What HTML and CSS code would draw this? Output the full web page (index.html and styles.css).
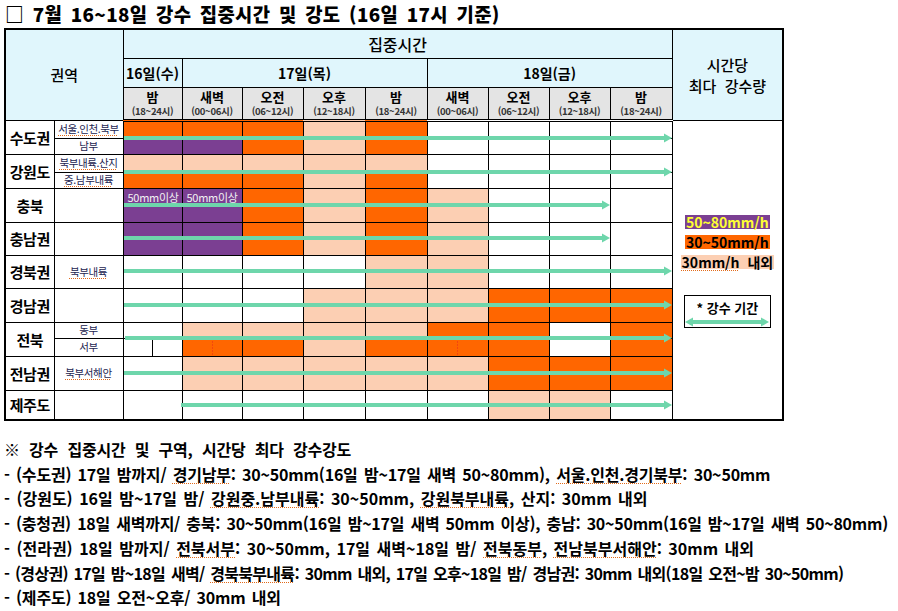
FILE: index.html
```html
<!DOCTYPE html>
<html lang="ko">
<head>
<meta charset="utf-8">
<title>7월 16~18일 강수 집중시간 및 강도</title>
<link rel="stylesheet" href="styles.css">
</head>
<body>
<h1 class="title">□ 7월 16~18일 강수 집중시간 및 강도 (16일 17시 기준)</h1>
<div class="chart">
<table class="grid">
<colgroup>
<col class="w49"><col class="w69"><col class="w59"><col class="w60"><col class="w61"><col class="w62"><col class="w62"><col class="w61"><col class="w61"><col class="w61"><col class="w62"><col class="w111">
</colgroup>
<thead>
<tr class="h1">
<th colspan="2" rowspan="3" class="hd reg-hd">권역</th>
<th colspan="9" class="hd big">집중시간</th>
<th rowspan="3" class="hd side">시간당<br>최다&nbsp; 강수량</th>
</tr>
<tr class="h2">
<th class="hd day">16일(수)</th>
<th colspan="4" class="hd day">17일(목)</th>
<th colspan="4" class="hd day">18일(금)</th>
</tr>
<tr class="h3">
<th class="tm"><b>밤</b><small>(18~24시)</small></th>
<th class="tm"><b>새벽</b><small>(00~06시)</small></th>
<th class="tm"><b>오전</b><small>(06~12시)</small></th>
<th class="tm"><b>오후</b><small>(12~18시)</small></th>
<th class="tm"><b>밤</b><small>(18~24시)</small></th>
<th class="tm"><b>새벽</b><small>(00~06시)</small></th>
<th class="tm"><b>오전</b><small>(06~12시)</small></th>
<th class="tm"><b>오후</b><small>(12~18시)</small></th>
<th class="tm"><b>밤</b><small>(18~24시)</small></th>
</tr>
</thead>
<tbody>
<tr class="r18">
<td rowspan="2" class="reg">수도권</td><td class="sub"><span class="sp">서울.인천.북부</span></td>
<td class="o"></td><td class="o"></td><td class="o"></td><td class="p"></td><td class="o"></td><td></td><td></td><td></td><td></td>
<td rowspan="12" class="legend-cell">
<div class="legend">
<span class="lg lg-purple">50~80mm/h</span>
<span class="lg lg-orange">30~50mm/h</span>
<span class="lg lg-peach"><span class="sp">30mm/h</span>&nbsp; 내외</span>
<div class="lg-box">
<span class="lg-box-text">* 강수 기간</span>
<svg class="lg-arrow" width="84" height="10" viewBox="0 0 84 10"><line x1="6" y1="5" x2="78" y2="5" stroke="#6ed6ab" stroke-width="4"/><polygon points="0,5 8,0.5 8,9.5" fill="#6ed6ab"/><polygon points="84,5 76,0.5 76,9.5" fill="#6ed6ab"/></svg>
</div>
</div>
</td>
</tr>
<tr class="r16">
<td class="sub">남부</td>
<td class="v"></td><td class="v"></td><td class="o"></td><td class="p"></td><td class="o"></td><td></td><td></td><td></td><td></td>
</tr>
<tr class="r18">
<td rowspan="2" class="reg">강원도</td><td class="sub"><span class="sp">북부내륙.산지</span></td>
<td class="p"></td><td class="p"></td><td class="p"></td><td class="p"></td><td class="p"></td><td></td><td></td><td></td><td></td>
</tr>
<tr class="r16">
<td class="sub"><span class="sp">중.남부내륙</span></td>
<td class="o"></td><td class="o"></td><td class="o"></td><td class="p"></td><td class="o"></td><td></td><td></td><td></td><td></td>
</tr>
<tr class="r34">
<td class="reg">충북</td><td class="sub"></td>
<td class="v note"><span class="sp">50mm이상</span></td><td class="v note"><span class="sp">50mm이상</span></td><td class="o"></td><td class="p"></td><td class="o"></td><td class="p"></td><td></td><td></td><td></td>
</tr>
<tr class="r33">
<td class="reg">충남권</td><td class="sub"></td>
<td class="v"></td><td class="v"></td><td class="o"></td><td class="p"></td><td class="o"></td><td class="p"></td><td></td><td></td><td></td>
</tr>
<tr class="r33">
<td class="reg">경북권</td><td class="sub"><span class="sp">북부내륙</span></td>
<td></td><td></td><td></td><td></td><td class="p"></td><td class="p"></td><td></td><td></td><td></td>
</tr>
<tr class="r34">
<td class="reg">경남권</td><td class="sub"></td>
<td></td><td></td><td></td><td class="p"></td><td class="p"></td><td class="p"></td><td class="o"></td><td class="o"></td><td class="o"></td>
</tr>
<tr class="r16">
<td rowspan="2" class="reg">전북</td><td class="sub">동부</td>
<td></td><td class="p"></td><td class="p"></td><td class="p"></td><td class="p"></td><td class="o"></td><td class="o"></td><td></td><td class="o"></td>
</tr>
<tr class="r18">
<td class="sub">서부</td>
<td class="split"></td><td class="o dash"></td><td class="o"></td><td class="p"></td><td class="o"></td><td class="o dash"></td><td class="o"></td><td></td><td class="o"></td>
</tr>
<tr class="r34">
<td class="reg">전남권</td><td class="sub"><span class="sp">북부서해안</span></td>
<td></td><td class="p"></td><td class="p"></td><td class="p"></td><td class="p"></td><td class="p"></td><td class="o"></td><td class="o"></td><td class="o"></td>
</tr>
<tr class="r30">
<td class="reg">제주도</td><td class="sub"></td>
<td></td><td></td><td></td><td></td><td></td><td></td><td class="p"></td><td class="p"></td><td></td>
</tr>
</tbody>
</table>
<svg class="arrows" width="780" height="400" viewBox="0 0 780 400">
<g fill="#6ed6ab" stroke="#6ed6ab">
<line x1="120" y1="110" x2="662" y2="110" stroke-width="4"/><polygon points="660,105.5 668,110 660,114.5" stroke="none"/>
<line x1="120" y1="144" x2="662" y2="144" stroke-width="4"/><polygon points="660,139.5 668,144 660,148.5" stroke="none"/>
<line x1="120" y1="177" x2="600" y2="177" stroke-width="4"/><polygon points="598,172.5 606,177 598,181.5" stroke="none"/>
<line x1="120" y1="210" x2="600" y2="210" stroke-width="4"/><polygon points="598,205.5 606,210 598,214.5" stroke="none"/>
<line x1="120" y1="243" x2="662" y2="243" stroke-width="4"/><polygon points="660,238.5 668,243 660,247.5" stroke="none"/>
<line x1="120" y1="277" x2="662" y2="277" stroke-width="4"/><polygon points="660,272.5 668,277 660,281.5" stroke="none"/>
<line x1="121" y1="310" x2="662" y2="310" stroke-width="4"/><polygon points="660,305.5 668,310 660,314.5" stroke="none"/>
<line x1="120" y1="345" x2="662" y2="345" stroke-width="4"/><polygon points="660,340.5 668,345 660,349.5" stroke="none"/>
<line x1="177" y1="377" x2="662" y2="377" stroke-width="4"/><polygon points="660,372.5 668,377 660,381.5" stroke="none"/>
</g>
</svg>
</div>
<div class="notes">
<p class="lead">※ 강수 집중시간 및 구역, 시간당 최다 강수강도</p>
<p>- (수도권) 17일 밤까지/ <span class="sp">경기남부</span>: 30~50mm(16일 밤~17일 새벽 50~80mm), <span class="sp">서울.인천.경기북부</span>: 30~50mm</p>
<p class="wide">- (강원도) 16일 밤~17일 밤/ <span class="sp">강원중.남부내륙</span>: 30~50mm, <span class="sp">강원북부내륙</span>, 산지: 30mm 내외</p>
<p class="snug">- (충청권) 18일 새벽까지/ 충북: 30~50mm(16일 밤~17일 새벽 50mm 이상), 충남: 30~50mm(16일 밤~17일 새벽 50~80mm)</p>
<p class="wide">- (전라권) 18일 밤까지/ <span class="sp">전북서부</span>: 30~50mm, 17일 새벽~18일 밤/ <span class="sp">전북동부</span>, <span class="sp">전남북부서해안</span>: 30mm 내외</p>
<p class="tight">- (경상권) 17일 밤~18일 새벽/ <span class="sp">경북북부내륙</span>: 30mm 내외, 17일 오후~18일 밤/ 경남권: 30mm 내외(18일 오전~밤 30~50mm)</p>
<p>- (제주도) 18일 오전~오후/ 30mm 내외</p>
</div>
</body>
</html>
```

FILE: styles.css
```css
* { box-sizing: border-box; }
html, body { background: #fff; }
body {
  margin: 0;
  padding: 0 0 0 4px;
  width: 898px;
  font-family: "Noto Sans CJK KR", "Noto Sans", sans-serif;
  color: #000;
}
.title {
  margin: 0;
  height: 28px;
  padding-left: 1px;
  font-size: 18.8px;
  font-weight: 900;
  line-height: 27px;
  letter-spacing: 0.35px;
  word-spacing: 3px;
  white-space: nowrap;
}
.chart { position: relative; width: 780px; }
.grid {
  border-collapse: collapse;
  table-layout: fixed;
  width: 780px;
  border: 2px solid #000;
}
.w49 { width: 49px; } .w59 { width: 59px; } .w60 { width: 60px; }
.w61 { width: 61px; } .w62 { width: 62px; } .w69 { width: 69px; }
.w111 { width: 111px; }
.grid th, .grid td {
  border: 1px solid #000;
  padding: 0;
  text-align: center;
  vertical-align: middle;
}
.hd { background: #e0f6fc; }
.reg-hd { font-size: 15px; font-weight: 500; }
.big { font-size: 16px; font-weight: 500; }
.side { font-size: 15px; font-weight: 500; line-height: 21px; }
.day { font-size: 14px; font-weight: 700; }
.h1 { height: 29px; }
.h2 { height: 29px; }
.h3 { height: 33px; }
.grid .tm {
  background: #e4e4e4;
  border-bottom: 3px double #000;
  padding-top: 1px;
}
.tm b { display: block; font-size: 13px; font-weight: 700; line-height: 14px; }
.tm small { display: block; font-size: 9.5px; line-height: 11px; margin-top: 2px; color: #333; letter-spacing: -0.3px; }
.r16 { height: 16px; } .r18 { height: 18px; } .r30 { height: 30px; }
.r33 { height: 33px; } .r34 { height: 34px; }
.reg { font-size: 15px; font-weight: 700; letter-spacing: -0.5px; }
.sub { font-size: 10.5px; line-height: 12px; color: #1c2450; letter-spacing: -0.4px; white-space: nowrap; }
.o { background: #ff6600; }
.p { background: #fccfb3; }
.v { background: #7b3f92; }
.grid td.note {
  vertical-align: top;
  text-align: left;
  padding: 2px 0 0 4px;
  font-size: 11px;
  line-height: 13px;
  color: #f2f2f2;
  letter-spacing: -0.3px;
  white-space: nowrap;
}
.dash {
  background-image: linear-gradient(#e8281c 50%, transparent 50%);
  background-size: 1px 3px;
  background-repeat: repeat-y;
  background-position: center top;
}
.split {
  background-image: linear-gradient(#000, #000);
  background-size: 1px 100%;
  background-repeat: no-repeat;
  background-position: center;
}
.sp {
  text-decoration: underline dotted #e26a1a;
  text-decoration-thickness: 1px;
  text-underline-offset: 2px;
}
.legend-cell { background: #fff; }
.legend {
  display: flex;
  flex-direction: column;
  align-items: center;
  padding-top: 4px;
}
.lg {
  font-size: 14px;
  font-weight: 700;
  line-height: 14px;
  padding: 0 1px;
  white-space: nowrap;
}
.lg-purple { background: #7b3f92; color: #ffff33; }
.lg-orange { background: #ff6600; color: #000; margin-top: 6px; }
.lg-peach { background: #fccfb3; color: #000; margin-top: 6px; }
.lg-box {
  margin-top: 26px;
  width: 87px;
  height: 33px;
  border: 1px solid #000;
  display: flex;
  flex-direction: column;
  align-items: center;
  padding-top: 4px;
}
.lg-box-text { font-size: 13px; font-weight: 700; line-height: 15px; }
.lg-arrow { margin-top: 2px; display: block; }
.arrows { position: absolute; left: 0; top: 0; pointer-events: none; }
.notes { margin-top: 16px; }
.notes p {
  margin: 0;
  font-size: 16px;
  font-weight: 700;
  line-height: 24.7px;
  white-space: nowrap;
  letter-spacing: -0.2px;
  word-spacing: 2px;
}
.notes .lead { word-spacing: 5px; }
.notes .snug { letter-spacing: -0.25px; }
.notes .wide { letter-spacing: 0px; }
.notes .tight { letter-spacing: -0.7px; }
```
